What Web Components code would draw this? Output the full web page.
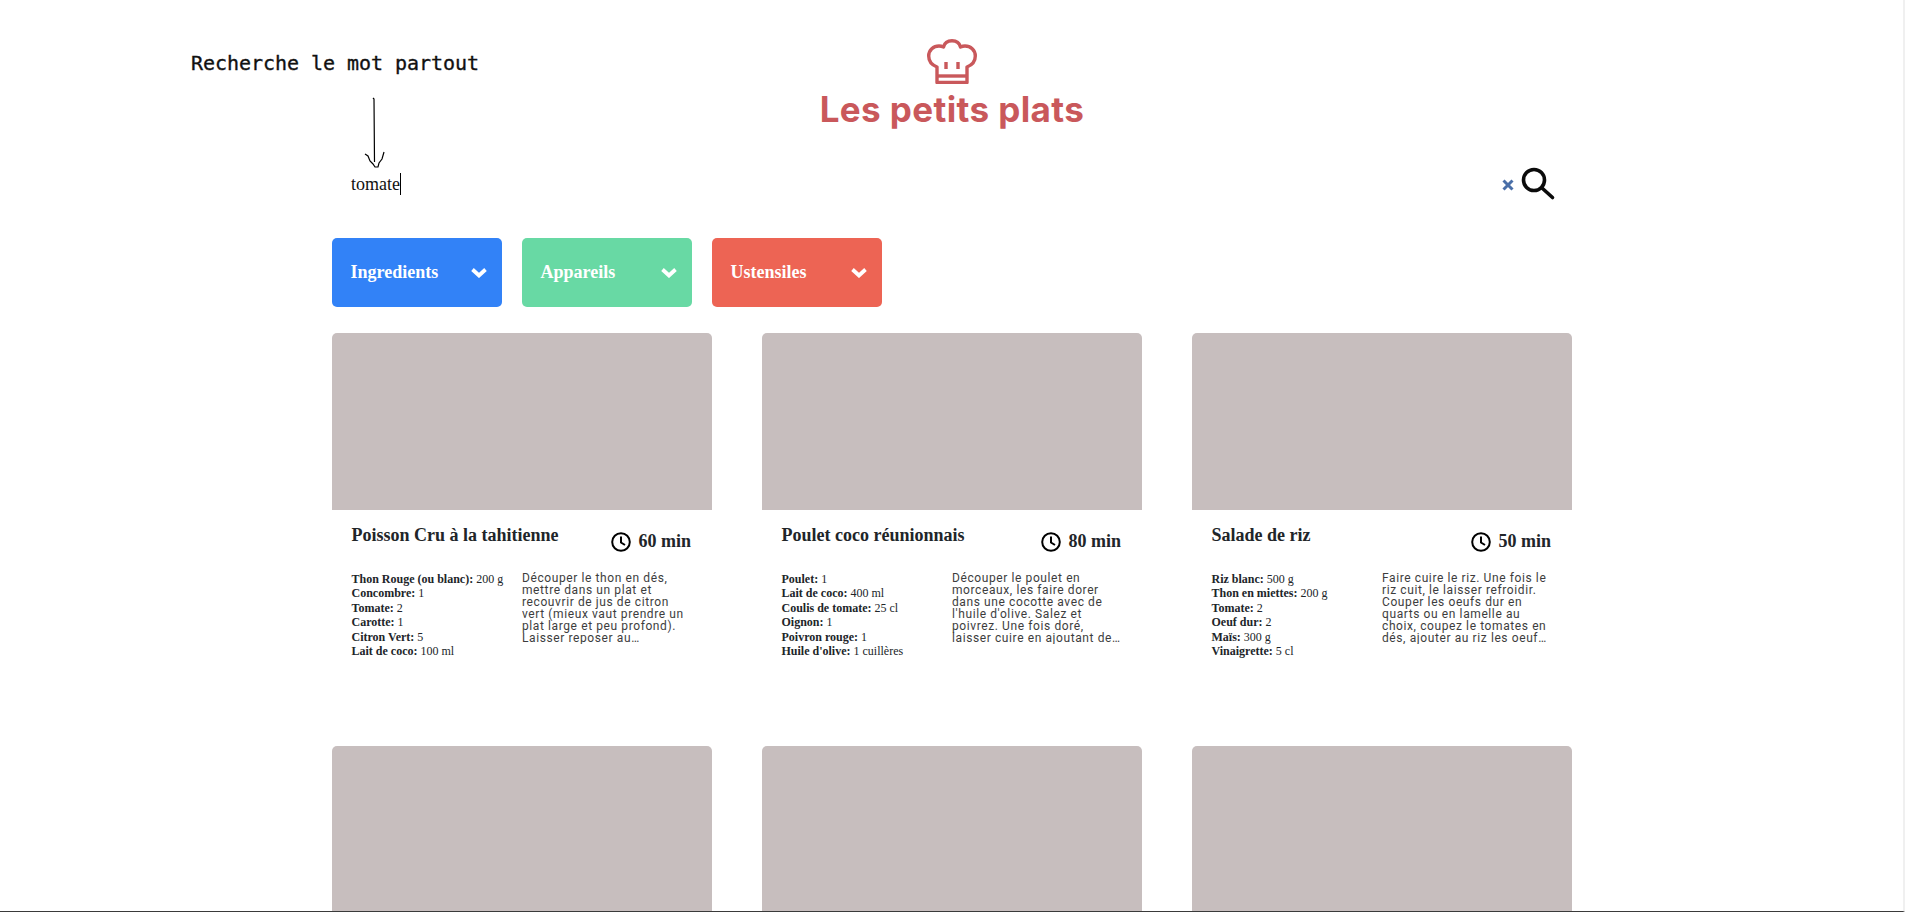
<!DOCTYPE html>
<html lang="fr">
<head>
<meta charset="utf-8">
<title>Les petits plats</title>
<style>
    html, body { margin: 0; height: 912px; overflow: hidden; background: #fff; }
    body { font-family: "Liberation Serif", serif; color: #212529; }
</style>
</head>
<body>
<page-frame>
    <search-note slot="overlay">Recherche le mot partout</search-note>
    <brand-header>Les petits plats</brand-header>
    <search-bar value="tomate"></search-bar>
    <filter-row>
        <filter-button color="#3282f7">Ingredients</filter-button>
        <filter-button color="#68d9a4">Appareils</filter-button>
        <filter-button color="#ed6454">Ustensiles</filter-button>
    </filter-row>
    <recipe-grid>
        <recipe-card>
            <span slot="title">Poisson Cru à la tahitienne</span>
            <span slot="time">60 min</span>
            <ingredient-line slot="ingredients"><b>Thon Rouge (ou blanc):</b> 200 g</ingredient-line>
            <ingredient-line slot="ingredients"><b>Concombre:</b> 1</ingredient-line>
            <ingredient-line slot="ingredients"><b>Tomate:</b> 2</ingredient-line>
            <ingredient-line slot="ingredients"><b>Carotte:</b> 1</ingredient-line>
            <ingredient-line slot="ingredients"><b>Citron Vert:</b> 5</ingredient-line>
            <ingredient-line slot="ingredients"><b>Lait de coco:</b> 100 ml</ingredient-line>
            <span slot="description">Découper le thon en dés, mettre dans un plat et recouvrir de jus de citron vert (mieux vaut prendre un plat large et peu profond). Laisser reposer au réfrigérateur au moins 2 heures.</span>
        </recipe-card>
        <recipe-card>
            <span slot="title">Poulet coco réunionnais</span>
            <span slot="time">80 min</span>
            <ingredient-line slot="ingredients"><b>Poulet:</b> 1</ingredient-line>
            <ingredient-line slot="ingredients"><b>Lait de coco:</b> 400 ml</ingredient-line>
            <ingredient-line slot="ingredients"><b>Coulis de tomate:</b> 25 cl</ingredient-line>
            <ingredient-line slot="ingredients"><b>Oignon:</b> 1</ingredient-line>
            <ingredient-line slot="ingredients"><b>Poivron rouge:</b> 1</ingredient-line>
            <ingredient-line slot="ingredients"><b>Huile d'olive:</b> 1 cuillères</ingredient-line>
            <span slot="description">Découper le poulet en morceaux, les faire dorer dans une cocotte avec de l'huile d'olive. Salez et poivrez. Une fois doré, laisser cuire en ajoutant de l'eau.</span>
        </recipe-card>
        <recipe-card>
            <span slot="title">Salade de riz</span>
            <span slot="time">50 min</span>
            <ingredient-line slot="ingredients"><b>Riz blanc:</b> 500 g</ingredient-line>
            <ingredient-line slot="ingredients"><b>Thon en miettes:</b> 200 g</ingredient-line>
            <ingredient-line slot="ingredients"><b>Tomate:</b> 2</ingredient-line>
            <ingredient-line slot="ingredients"><b>Oeuf dur:</b> 2</ingredient-line>
            <ingredient-line slot="ingredients"><b>Maïs:</b> 300 g</ingredient-line>
            <ingredient-line slot="ingredients"><b>Vinaigrette:</b> 5 cl</ingredient-line>
            <span slot="description">Faire cuire le riz. Une fois le riz cuit, le laisser refroidir. Couper les oeufs dur en quarts ou en lamelle au choix, coupez le tomates en dés, ajouter au riz les oeufs, le thon, et les tomates.</span>
        </recipe-card>
        <recipe-card></recipe-card>
        <recipe-card></recipe-card>
        <recipe-card></recipe-card>
    </recipe-grid>
</page-frame>

<script>
    // petit helper pour éviter de répéter attachShadow partout
    class BaseElement extends HTMLElement {
        constructor(html) {
            super();
            this.attachShadow({ mode: 'open' }).innerHTML = html;
        }
    }

    class PageFrame extends BaseElement {
        constructor() {
            super(`
                <style>
                    :host {
                        display: block;
                        position: relative;
                        height: 912px;
                        box-sizing: border-box;
                        overflow: hidden;
                        border-right: 2px solid #f0f0f0;
                        border-bottom: 1px solid #3a3a3a;
                    }
                    main {
                        width: 1240px;
                        margin-left: 332px;
                        padding-top: 39px;
                    }
                </style>
                <slot name="overlay"></slot>
                <main><slot></slot></main>
            `);
        }
    }

    // annotation posée par-dessus la capture, avec la flèche dessinée à la main
    class SearchNote extends BaseElement {
        constructor() {
            super(`
                <style>
                    :host {
                        position: absolute;
                        left: 191px;
                        top: 50px;
                        display: block;
                        font: 500 20px/26px "DejaVu Sans Mono", monospace;
                        letter-spacing: -0.04px;
                        -webkit-text-stroke: 0.35px #111;
                        color: #111;
                        white-space: nowrap;
                    }
                    svg { position: absolute; left: 170px; top: 46px; }
                </style>
                <slot></slot>
                <svg width="30" height="76" viewBox="0 0 30 76" fill="none" stroke="#000" stroke-width="1.2">
                    <path d="M12 2 L13 3 L13.500 66"/>
                    <path d="M4 58 L7 60 L9 65 L12 68 L14 71 L17 71 L18 67 L21 63 L23 56"/>
                </svg>
            `);
        }
    }

    class BrandHeader extends BaseElement {
        constructor() {
            super(`
                <style>
                    :host {
                        display: flex;
                        flex-direction: column;
                        align-items: center;
                        color: #c9585b;
                    }
                    svg { display: block; }
                    h1 {
                        margin: 3px 0 0;
                        font: 700 35px/44px Inter, sans-serif;
                        letter-spacing: 0.4px;
                    }
                </style>
                <svg width="50" height="45" viewBox="0 0 50 45" fill="none" stroke="currentColor" stroke-width="3.4" stroke-linejoin="round">
                    <path d="M10 43.500 V28 C5 26 1.700 22 1.700 17 C1.700 11 6.500 7 12 7 C13.500 7 15 7.300 16.500 8 C17.500 4 21 1.700 25 1.700 C29 1.700 32.500 4 33.500 8 C35 7.300 36.500 7 38 7 C43.500 7 48.300 11 48.300 17 C48.300 22 45 26 40 28 V43.500 Z"/>
                    <path d="M10 37 H40"/>
                    <path d="M19 23 V30 M31 23 V30"/>
                </svg>
                <h1><slot></slot></h1>
            `);
        }
    }

    class SearchBar extends BaseElement {
        constructor() {
            super(`
                <style>
                    :host {
                        display: flex;
                        align-items: center;
                        height: 48px;
                        margin-top: 29px;
                        padding: 0 13px 0 19px;
                        font-size: 18px;
                        color: #111;
                    }
                    .value {
                        flex: 1;
                    }
                    .value span {
                        border-right: 1px solid #000;
                        padding: 1px 0;
                    }
                    .clear { display: block; margin-right: 2px; margin-top: 2px; }
                    .loupe { display: block; }
                </style>
                <div class="value"><span></span></div>
                <svg class="clear" width="14" height="14" viewBox="0 0 14 14" stroke="#4a6fa8" stroke-width="3">
                    <path d="M2.500 2.500 L11.500 11.500 M11.500 2.500 L2.500 11.500"/>
                </svg>
                <svg class="loupe" width="42" height="42" viewBox="0 0 42 42" fill="none" stroke="#0b0b0b" stroke-width="3.600" stroke-linecap="round">
                    <circle cx="17" cy="17" r="10.500"/>
                    <path d="M25 25 L35.500 34.500"/>
                </svg>
            `);
        }

        connectedCallback() {
            this.shadowRoot.querySelector('.value span').textContent = this.getAttribute('value');
        }
    }

    class FilterRow extends BaseElement {
        constructor() {
            super(`
                <style>
                    :host { display: flex; gap: 20px; margin-top: 30px; }
                </style>
                <slot></slot>
            `);
        }
    }

    class FilterButton extends BaseElement {
        constructor() {
            super(`
                <style>
                    :host {
                        display: flex;
                        align-items: center;
                        justify-content: space-between;
                        width: 170px;
                        height: 69px;
                        box-sizing: border-box;
                        padding: 0 15px 0 18.5px;
                        border-radius: 5px;
                        font-size: 18px;
                        font-weight: 700;
                        color: #fff;
                        background: var(--btn-color);
                    }
                    svg { display: block; }
                </style>
                <span><slot></slot></span>
                <svg width="16" height="10" viewBox="0 0 16 10" fill="none" stroke="#fff" stroke-width="3.800">
                    <path d="M1.500 1.500 L8 7.500 L14.500 1.500"/>
                </svg>
            `);
        }

        connectedCallback() {
            this.style.setProperty('--btn-color', this.getAttribute('color'));
        }
    }

    class RecipeGrid extends BaseElement {
        constructor() {
            super(`
                <style>
                    :host {
                        display: grid;
                        grid-template-columns: repeat(3, 380px);
                        column-gap: 50px;
                        row-gap: 50px;
                        margin-top: 26px;
                    }
                </style>
                <slot></slot>
            `);
        }
    }

    class RecipeCard extends BaseElement {
        constructor() {
            super(`
                <style>
                    :host {
                        display: block;
                        height: 363px;
                        border-radius: 5px;
                        overflow: hidden;
                        background: #fff;
                    }
                    .photo { height: 177px; background: #c7bebe; }
                    .body { padding: 15px 21px 0 19.5px; }
                    .head {
                        display: flex;
                        justify-content: space-between;
                        align-items: flex-start;
                        font-size: 18px;
                        font-weight: 700;
                        line-height: 21px;
                    }
                    .time {
                        display: flex;
                        align-items: center;
                        gap: 7px;
                        margin-top: 6px;
                        white-space: nowrap;
                    }
                    .details {
                        display: grid;
                        grid-template-columns: 170.500px 170px;
                        margin-top: 20px;
                    }
                    .desc {
                        font: 12px/12px Roboto, sans-serif;
                        letter-spacing: 0.6px;
                        color: #3d3d3d;
                        display: -webkit-box;
                        -webkit-box-orient: vertical;
                        -webkit-line-clamp: 6;
                        max-height: 72px;
                        overflow: hidden;
                    }
                    svg { display: block; }
                    :host(:empty) .body { display: none; }
                </style>
                <div class="photo"></div>
                <div class="body">
                    <div class="head">
                        <span><slot name="title"></slot></span>
                        <span class="time">
                            <svg width="20" height="20" viewBox="0 0 20 20" fill="none" stroke="#000" stroke-width="2">
                                <circle cx="10" cy="10" r="8.800"/>
                                <path d="M10 4.500 V10.500 L14 13"/>
                            </svg>
                            <slot name="time"></slot>
                        </span>
                    </div>
                    <div class="details">
                        <div><slot name="ingredients"></slot></div>
                        <div class="desc"><slot name="description"></slot></div>
                    </div>
                </div>
            `);
        }
    }

    class IngredientLine extends BaseElement {
        constructor() {
            super(`
                <style>
                    :host {
                        display: block;
                        font-size: 12px;
                        line-height: 14.4px;
                        white-space: nowrap;
                    }
                </style>
                <slot></slot>
            `);
        }
    }

    customElements.define('page-frame', PageFrame);
    customElements.define('search-note', SearchNote);
    customElements.define('brand-header', BrandHeader);
    customElements.define('search-bar', SearchBar);
    customElements.define('filter-row', FilterRow);
    customElements.define('filter-button', FilterButton);
    customElements.define('recipe-grid', RecipeGrid);
    customElements.define('recipe-card', RecipeCard);
    customElements.define('ingredient-line', IngredientLine);
</script>
</body>
</html>
